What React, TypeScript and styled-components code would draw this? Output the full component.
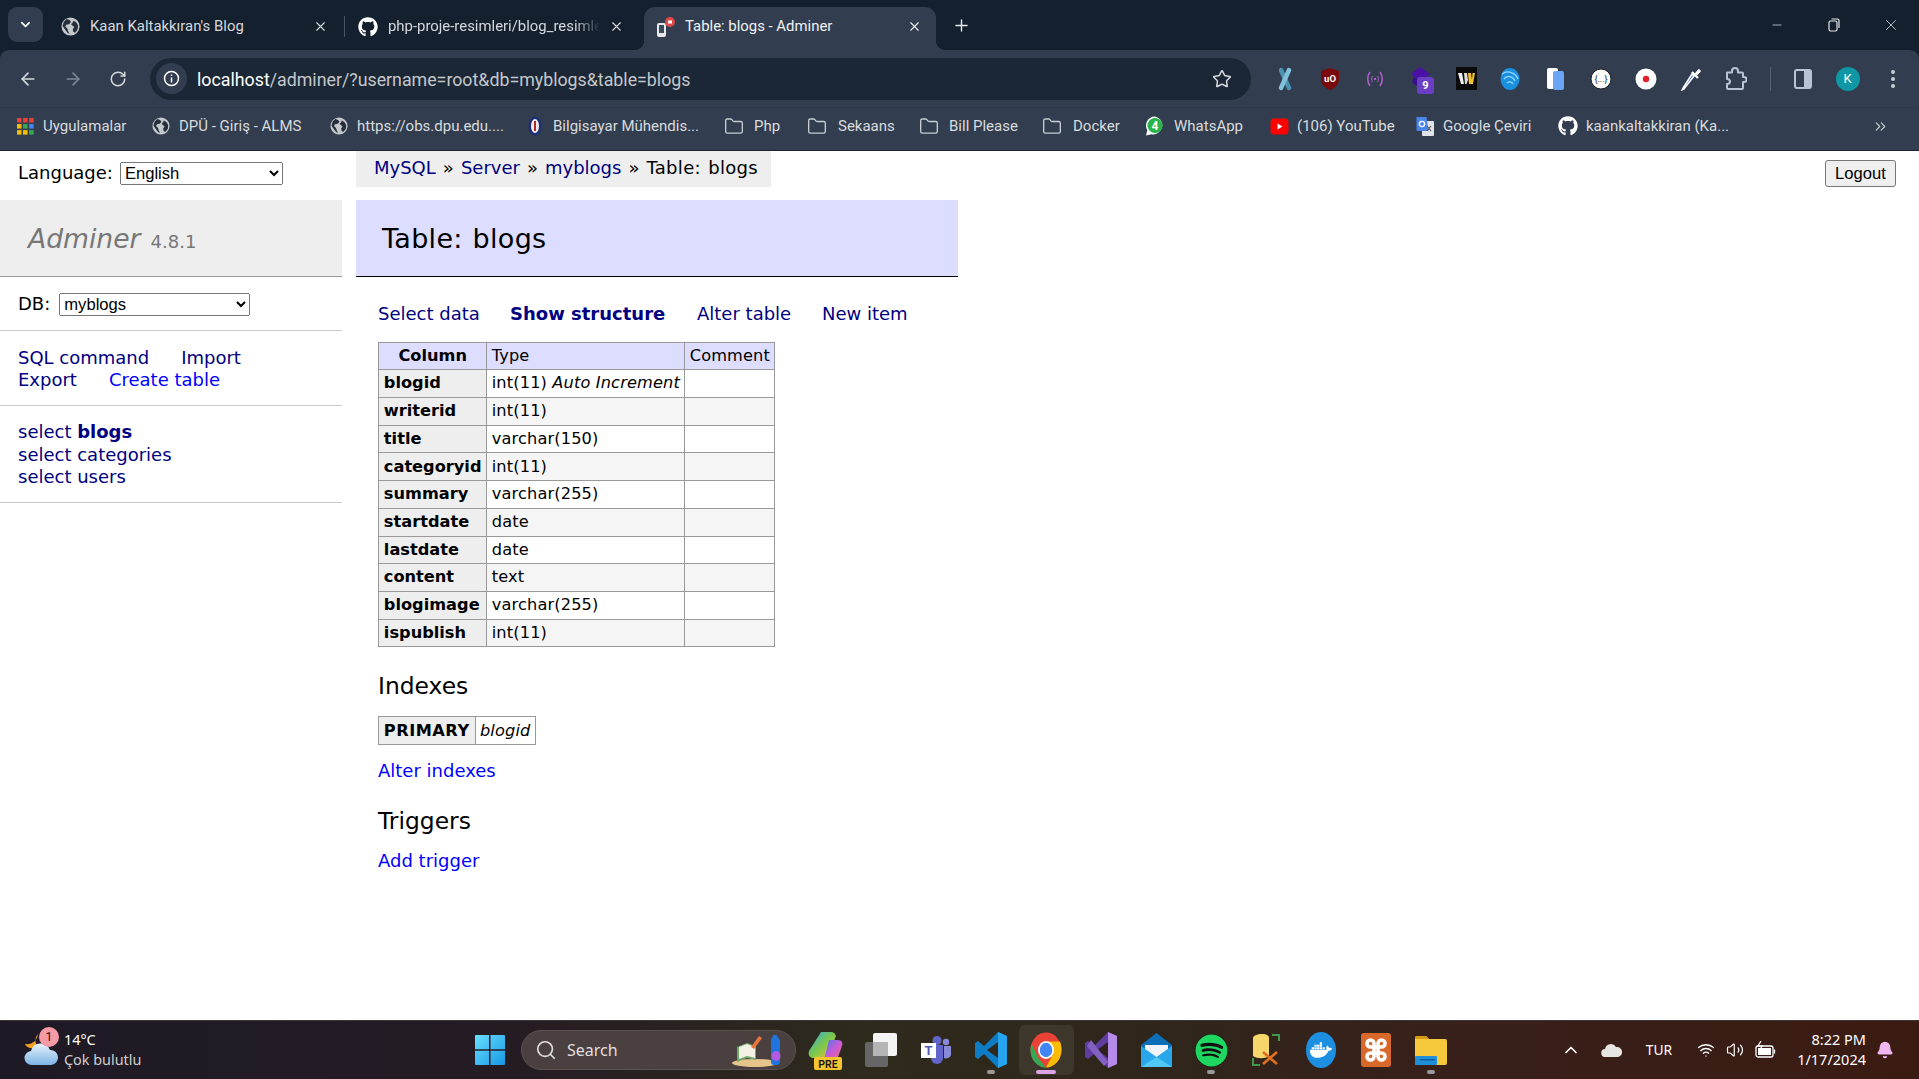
import React from 'react';
import styled, { createGlobalStyle } from 'styled-components';
import { ArrowLeft, ArrowRight, RotateCw, Star, Folder, ChevronDown, ChevronUp, Plus, X, Minus, ChevronsRight, Search, Wifi, Volume2, Bell } from 'lucide-react';
import { FaGithub, FaSpotify, FaDocker } from 'react-icons/fa';

const Global = createGlobalStyle`
  html, body { margin: 0; padding: 0; height: 100%; overflow: hidden; background: #fff; }
  #root { height: 100%; }
  * { box-sizing: border-box; }
`;

const Screen = styled.div`
  width: 1919px; height: 1079px; display: flex; flex-direction: column;
  font-family: "DejaVu Sans", Verdana, sans-serif; font-size: 18px; line-height: 22.5px; color: #000;
`;

/* ---------- browser chrome ---------- */
const Chrome = styled.div`
  background: #15202e; color: #e3e5e8; font-family: Roboto, "Noto Sans", sans-serif; flex: none;
  border-bottom: 1px solid #1b2533;
`;
const TabStrip = styled.div`display: flex; align-items: flex-end; height: 50px; padding-left: 8px;`;
const TabSearch = styled.div`
  width: 35px; height: 35px; margin: 0 8px 8px 0; border-radius: 9px; background: #323e4f;
  display: flex; align-items: center; justify-content: center; color: #fff;
`;
const Tab = styled.div<{ $w: number; $active?: boolean; $sep?: boolean; $pl: number; $pr: number }>`
  position: relative; width: ${p => p.$w}px; height: 43px; display: flex; align-items: center; flex: none;
  padding: 0 ${p => p.$pr}px 4px ${p => p.$pl}px;
  background: ${p => (p.$active ? '#323e4f' : 'transparent')};
  border-radius: 11px 11px 0 0; font-size: 14.9px;
  color: ${p => (p.$active ? '#f0f1f3' : '#d5d8dc')};
  ${p => p.$sep && `&::before { content: ''; position: absolute; left: 0; top: 9px; height: 21px; width: 1px; background: #4a5563; }`}
  ${p => p.$active && `
    &::before, &::after { content: ''; position: absolute; bottom: 0; width: 10px; height: 10px; }
    &::before { left: -10px; background: radial-gradient(circle at 0 0, transparent 10px, #323e4f 10.5px); }
    &::after { right: -10px; background: radial-gradient(circle at 100% 0, transparent 10px, #323e4f 10.5px); }
  `}
`;
const TabTitle = styled.span<{ $fade?: boolean; $gap: number }>`
  flex: 1; min-width: 0; white-space: nowrap; overflow: hidden; margin-left: ${p => p.$gap}px;
  ${p => p.$fade && `margin-right: 9px; -webkit-mask-image: linear-gradient(to right, #000 88%, transparent 100%); mask-image: linear-gradient(to right, #000 88%, transparent 100%);`}
`;
const NewTab = styled.div`
  width: 24px; height: 24px; margin: 0 0 13px 13px; display: flex; align-items: center; justify-content: center; color: #e8eaed;
`;
const WindowButtons = styled.div`display: flex; margin-left: auto; height: 50px; align-items: center; color: #e6e8ea;`;
const WinBtn = styled.div<{ $w: number }>`width: ${p => p.$w}px; display: flex; justify-content: center; align-items: center;`;

const Toolbar = styled.div`
  height: 58px; background: #323e4f; border-radius: 9px 9px 0 0; display: flex; align-items: center; padding: 0 0 0 10px;
  border-bottom: 1px solid #2c3747;
`;
const NavBtn = styled.div<{ $dim?: boolean }>`
  width: 36px; height: 36px; margin-right: 9px; display: flex; align-items: center; justify-content: center;
  color: ${p => (p.$dim ? '#7d8794' : '#d5d8dc')};
`;
const Omnibox = styled.div`
  width: 1101px; height: 42px; margin-left: 5px; border-radius: 21px; background: #1c2736;
  display: flex; align-items: center; padding-left: 6px; flex: none;
`;
const InfoCircle = styled.div`
  width: 31px; height: 31px; border-radius: 50%; background: #323e4f; display: flex; align-items: center; justify-content: center; flex: none;
`;
const Url = styled.div`flex: 1; margin-left: 10px; padding-top: 3px; font-size: 17.8px; color: #c3c7cc; white-space: nowrap;`;
const UrlHost = styled.span`color: #fff;`;
const OmniStar = styled.div`width: 58px; display: flex; justify-content: center; color: #d5d8dc;`;
const Exts = styled.div`display: flex; align-items: center; margin-left: 11px;`;
const ExtSlot = styled.div<{ $w?: number }>`
  position: relative; width: ${p => p.$w ?? 45}px; display: flex; align-items: center; justify-content: center; flex: none;
`;
const ExtBadge = styled.span`
  position: absolute; left: 20px; top: 10px; width: 17px; height: 17px; border-radius: 3px; background: #6a3fc4; color: #fff;
  font: bold 11px/17px Roboto, sans-serif; text-align: center;
`;
const ToolSep = styled.div`width: 1px; height: 24px; background: #556070;`;
const Avatar = styled.div`
  width: 24px; height: 24px; border-radius: 50%; background: #0f97a6; color: #fff;
  font: 13px/24px Roboto, sans-serif; text-align: center;
`;

const Bookmarks = styled.div`height: 42px; background: #323e4f; display: flex; align-items: center; padding: 0 0 6px 15px; position: relative;`;
const Bookmark = styled.div<{ $w: number; $gap: number }>`
  width: ${p => p.$w}px; flex: none; display: flex; align-items: center; gap: ${p => p.$gap}px; font-size: 15px; white-space: nowrap; color: #d9dbde;
`;
const BookmarkIcon = styled.span`width: 20px; height: 20px; display: flex; align-items: center; justify-content: center; flex: none;`;
const More = styled.div`margin-left: auto; margin-right: 30px; color: #c8ccd1; display: flex;`;

/* ---------- page ---------- */
const Page = styled.div`
  flex: 1; min-height: 0; background: #fff; display: grid; grid-template-columns: 342px 602px 1fr; column-gap: 14px;
`;
const Sidebar = styled.aside`display: flex; flex-direction: column;`;
const LangRow = styled.div`height: 49px; display: flex; align-items: center; gap: 7px; padding: 0 0 5px 18px;`;
const NativeSelect = styled.select<{ $w: number }>`
  width: ${p => p.$w}px; height: 23px; font: 16.6px "Liberation Sans", Arial, sans-serif; color: #000;
`;
const Logo = styled.div`
  height: 77px; background: #eee; border-bottom: 1px solid #999; padding: 2px 0 0 28px; display: flex; align-items: center; gap: 10px;
`;
const LogoName = styled.a`font-style: italic; font-size: 26.6px; color: #777; line-height: 34px;`;
const LogoVersion = styled.span`font-size: 18px; color: #777; position: relative; top: 3px;`;
const DbRow = styled.div`height: 54px; display: flex; align-items: center; gap: 9px; padding: 2px 0 0 18px; border-bottom: 1px solid #ccc;`;
const SideLinks = styled.div`height: 75px; padding: 15.5px 0 0 18px; border-bottom: 1px solid #ccc;`;
const LinkLine = styled.div`display: flex; gap: 32px;`;
const Link = styled.a<{ $fresh?: boolean; $bold?: boolean }>`
  color: ${p => (p.$fresh ? '#00f' : '#000080')}; font-weight: ${p => (p.$bold ? 700 : 400)}; white-space: pre;
`;
const SideTables = styled.div`height: 97px; padding: 15px 0 0 18px; border-bottom: 1px solid #ccc;`;

const Main = styled.main`display: flex; flex-direction: column; align-items: flex-start;`;
const Crumbs = styled.div`
  background: #eee; height: 36px; padding: 6px 18px 0; margin-bottom: 13px; white-space: pre; width: 415px; word-spacing: 1.3px;
`;
const CrumbCurrent = styled.span`letter-spacing: .3px;`;
const Header = styled.div`
  align-self: stretch; height: 77px; background: #ddf; border-bottom: 1px solid #000; padding: 2px 0 0 26px; display: flex; align-items: center;
`;
const Title = styled.h2`margin: 0; font-size: 27px; font-weight: 400; line-height: 34px; letter-spacing: .3px; word-spacing: 1px;`;
const Content = styled.div`padding: 26px 0 0 22px; display: flex; flex-direction: column; align-items: flex-start;`;
const TopLinks = styled.div`display: flex; height: 22.5px; margin-bottom: 16px;`;
const TopLink = styled(Link)<{ $w: number }>`width: ${p => p.$w}px;`;
const Grid = styled.table`border-collapse: collapse; border: 1px solid #999; font-size: 16.2px; line-height: 20.25px;`;
const Row = styled.tr<{ $even?: boolean }>`background: ${p => (p.$even ? '#f5f5f5' : '#fff')};`;
const HeadTh = styled.th`background: #ddf; border: 1px solid #999; padding: 3.24px 4.86px; font-weight: 700; text-align: center; white-space: nowrap;`;
const HeadTd = styled.td`background: #ddf; border: 1px solid #999; padding: 3.24px 4.4px; white-space: nowrap; letter-spacing: .14px;`;
const Th = styled.th`background: #eee; border: 1px solid #999; padding: 3.24px 4.86px; font-weight: 700; text-align: left; white-space: nowrap;`;
const KeyTh = styled(Th)`letter-spacing: .5px;`;
const Td = styled.td`border: 1px solid #999; padding: 3.24px 4.4px; white-space: nowrap; letter-spacing: .14px;`;
const Em = styled.i`font-style: italic;`;
const H3 = styled.h3`margin: 0; font-size: 23.4px; font-weight: 400; line-height: 30px;`;
const IndexHead = styled(H3)`margin-top: 24px;`;
const IndexGrid = styled(Grid)`margin-top: 15px;`;
const AfterIndex = styled.div`margin-top: 15px;`;
const TriggerHead = styled(H3)`margin-top: 23px;`;
const AfterTrigger = styled.div`margin-top: 14px;`;
const Aside = styled.div`display: flex; justify-content: flex-end; align-items: flex-start; padding: 9px 23px 0 0;`;
const Logout = styled.button`
  width: 71px; height: 27px; padding: 0; font: 16.6px "Liberation Sans", Arial, sans-serif; color: #000;
  background: #efefef; border: 1px solid #767676; border-radius: 3px;
`;

/* ---------- taskbar ---------- */
const Taskbar = styled.div`
  height: 59px; flex: none; display: flex; align-items: center; font-family: "Noto Sans", Roboto, sans-serif; color: #fff;
  background: linear-gradient(90deg, #1e1a25 0%, #241b24 25%, #2e2a1c 45%, #2f261b 60%, #38201a 75%, #3a1b12 100%);
  border-top: 1px solid #3a3636;
`;
const Weather = styled.div`width: 462px; flex: none; display: flex; align-items: center; padding-left: 24px; position: relative; height: 100%;`;
const WeatherBadge = styled.span`
  position: absolute; left: 39px; top: 6px; width: 20px; height: 20px; border-radius: 50%; background: #f79aa6; color: #3a1518;
  font: 13px/20px Roboto, sans-serif; text-align: center;
`;
const WeatherText = styled.div`margin-left: 6px; font-size: 14.4px; line-height: 20px;`;
const WeatherSub = styled.div`color: #cfcfcf;`;
const StartSlot = styled.div`width: 56px; flex: none; display: flex; justify-content: center;`;
const SearchBox = styled.div`
  width: 275px; height: 40px; margin-left: 3px; flex: none; border-radius: 20px; background: #4a403f; border: 1px solid #5a504f;
  display: flex; align-items: center; padding-left: 13px; color: #e2dfdf; font-size: 16px; position: relative;
`;
const SearchLabel = styled.span`margin-left: 10px;`;
const SearchArt = styled.span`margin-left: auto; margin-right: 8px; display: flex;`;
const AppSlots = styled.div`display: flex; margin-left: 2.5px;`;
const AppSlot = styled.div<{ $active?: boolean }>`
  position: relative; width: 55px; height: 50px; display: flex; align-items: center; justify-content: center; border-radius: 6px; flex: none;
  background: ${p => (p.$active ? 'rgba(255,255,255,.07)' : 'transparent')};
`;
const Indicator = styled.span<{ $active?: boolean }>`
  position: absolute; bottom: 1px; left: 50%; transform: translateX(-50%); height: 4px; border-radius: 2px;
  width: ${p => (p.$active ? 20 : 8)}px; background: ${p => (p.$active ? '#dca3e6' : '#9a9a9a')};
`;
const Tray = styled.div`margin-left: auto; display: flex; align-items: center; padding-right: 15px; height: 100%;`;
const TraySlot = styled.div<{ $w: number }>`width: ${p => p.$w}px; flex: none; display: flex; justify-content: center; align-items: center;`;
const TrayLang = styled(TraySlot)`font-size: 13.8px;`;
const Clock = styled.div`width: 79px; flex: none; text-align: right; font-size: 14.5px; line-height: 20px; padding-bottom: 3px;`;

/* ---------- drawings ---------- */
const Globe = ({ size = 19 }: { size?: number }) => (
  <svg width={size} height={size} viewBox="0 0 20 20">
    <circle cx="10" cy="10" r="9.5" fill="#c4c7cc" />
    <path d="M6 2.2l3 1 1.5 2-2 2.4-3 .5-1 2 2.2 2 .8 3 1.5 2.4-2-.6L4 13 1.6 9.5 3 5zM13 4l3 1.5 2 3.5-.4 4-2.6 3.5-2-.6-.6-3 1.6-2.4-2-1.6-1.4-1.4 1.6-1.4z" fill="#26303d" />
  </svg>
);
const AdminerFav = () => (
  <svg width="22" height="22" viewBox="0 0 22 22">
    <rect x="2" y="7" width="9" height="14" rx="2" fill="#e8e8ea" />
    <rect x="4" y="9" width="5" height="8" fill="#3b4a5c" />
    <circle cx="15" cy="6" r="5" fill="#e04848" />
    <path d="M13 4.5h4v3h-4z" fill="#fff" />
  </svg>
);
const Apps = () => (
  <svg width="17" height="17" viewBox="0 0 18 18">
    {[['#e94235', '#e94235', '#e94235'], ['#fbbc04', '#34a853', '#4285f4'], ['#fbbc04', '#fbbc04', '#34a853']].map((row, y) =>
      row.map((c, x) => <rect key={`${x}${y}`} x={x * 6.4} y={y * 6.4} width="4.8" height="4.8" fill={c} />))}
  </svg>
);
const Crest = () => (
  <svg width="14" height="20" viewBox="0 0 14 20">
    <ellipse cx="7" cy="10" rx="6.5" ry="9.5" fill="#1d2f7a" /><ellipse cx="7" cy="10" rx="4" ry="7" fill="#f1eee8" /><path d="M6 5h2v10H6z" fill="#b9252b" />
  </svg>
);
const Whats = () => (
  <svg width="21" height="22" viewBox="0 0 20 21">
    <path d="M10 1a9 9 0 0 0-7.7 13.6L1 20l5.5-1.3A9 9 0 1 0 10 1z" fill="#fff" />
    <circle cx="10" cy="10" r="7.6" fill="#28b44a" />
    <text x="10" y="14.5" fontSize="12" fontWeight="700" fill="#fff" textAnchor="middle" fontFamily="Roboto">4</text>
  </svg>
);
const Yt = () => (
  <svg width="19" height="19" viewBox="0 0 19 19"><rect x="0.5" y="1.5" width="18" height="16" rx="3.5" fill="#f00" /><path d="M7.5 6.5l5 3-5 3z" fill="#fff" /></svg>
);
const Translate = () => (
  <svg width="20" height="21" viewBox="0 0 20 21">
    <rect x="7" y="5" width="12" height="15" rx="1" fill="#dfe3e8" /><path d="M1.5 1h10l2 14H3a1.5 1.5 0 0 1-1.5-1.5z" fill="#4a86e8" />
    <circle cx="7" cy="8" r="2.6" fill="none" stroke="#fff" strokeWidth="1.3" /><path d="M12 10l4 5M16 10l-4 5" stroke="#555" strokeWidth="1.2" />
  </svg>
);
const XCross = () => (
  <svg width="18" height="24" viewBox="0 0 18 24">
    <path d="M5 3l8 18" stroke="#4a93b3" strokeWidth="4.5" strokeLinecap="round" /><path d="M13 3L5 21" stroke="#7fc1dc" strokeWidth="4.5" strokeLinecap="round" />
  </svg>
);
const UBlock = () => (
  <svg width="20" height="24" viewBox="0 0 20 24">
    <path d="M10 1l9 3v8c0 5-4 9-9 11-5-2-9-6-9-11V4z" fill="#7a0a0c" />
    <text x="10" y="14.5" fontSize="9.5" fontWeight="700" fill="#fff" textAnchor="middle" fontFamily="Roboto">uO</text>
  </svg>
);
const Cast = () => (
  <svg width="20" height="20" viewBox="0 0 20 20" fill="none" stroke="#b05fc9" strokeWidth="1.6">
    <path d="M5 3c-3 4-3 10 0 14M15 3c3 4 3 10 0 14" /><circle cx="10" cy="10" r="1.2" fill="#b05fc9" stroke="none" /><path d="M7.4 7c-1 2-1 4 0 6M12.6 7c1 2 1 4 0 6" strokeWidth="1" />
  </svg>
);
const Diamond = () => (
  <svg width="22" height="24" viewBox="0 0 22 24"><path d="M10 0l10 7-10 7L1 7z" fill="#4a10a8" /><path d="M4 10l8 6-4 4-6-5z" fill="#3a0c90" /></svg>
);
const WaBox = () => (
  <svg width="21" height="23" viewBox="0 0 21 23">
    <rect width="21" height="23" fill="#0a0a0a" />
    <path d="M2 6h4l2 11H5z" fill="#eee" /><path d="M8 6h3l1 7-1.500 4H9z" fill="#ddd" /><path d="M12 6h3l1 7 .5-7H19l-2 11h-4z" fill="#f2c230" />
  </svg>
);
const Swirl = () => (
  <svg width="22" height="24" viewBox="0 0 22 24" fill="none">
    <ellipse cx="11" cy="12" rx="9.500" ry="11" fill="#1b8fe0" />
    <path d="M3 7c5-4 13-2 16 5M5 12c3-4 9-3 11 2M8 16c2-2 5-1 6 1" stroke="#8fd6ff" strokeWidth="1.400" />
  </svg>
);
const Docs = () => (
  <svg width="20" height="24" viewBox="0 0 20 24"><rect x="1" y="1" width="11" height="21" rx="2" fill="#fff" /><rect x="7" y="4" width="11" height="19" rx="2" fill="#6ba6f5" /></svg>
);
const Braces = () => (
  <svg width="22" height="22" viewBox="0 0 22 22">
    <circle cx="11" cy="11" r="10" fill="#fff" stroke="#222" strokeWidth="1" />
    <text x="11" y="14.2" fontSize="9" fill="#222" textAnchor="middle" fontFamily="Roboto">{'{...}'}</text>
  </svg>
);
const Rec = () => (
  <svg width="22" height="22" viewBox="0 0 22 22"><circle cx="11" cy="11" r="10.500" fill="#fff" /><circle cx="11" cy="11" r="3.200" fill="#e5202a" /></svg>
);
const Dropper = () => (
  <svg width="22" height="24" viewBox="0 0 22 24" fill="none">
    <path d="M3 21l-1 2 2-1L14 9l-2-2z" fill="#3f6fe0" stroke="#fff" strokeWidth="1.500" />
    <path d="M12 5l6 6" stroke="#fff" strokeWidth="2.400" /><path d="M15 7l3-4c1-1.400 3 .6 2 2l-3 3" fill="#fff" stroke="#fff" />
  </svg>
);
const ExtPuzzle = () => (
  <svg width="22" height="24" viewBox="0 0 22 24" fill="none" stroke="#b9c3d3" strokeWidth="2" strokeLinejoin="round">
    <path d="M2 5.500h5V4a3 3 0 0 1 6 0v1.500h4a1 1 0 0 1 1 1V10h1a2.500 2.500 0 0 1 0 5h-1v6a1 1 0 0 1-1 1H3a1 1 0 0 1-1-1v-4c2.500 0 3-1.500 3-2.500S4.500 12 2 12z" />
  </svg>
);
const SidePanel = () => (
  <svg width="18" height="20" viewBox="0 0 18 20"><rect x="1" y="1" width="16" height="18" rx="2" fill="none" stroke="#b9c3d3" strokeWidth="2" /><rect x="10" y="1" width="7" height="18" fill="#b9c3d3" /></svg>
);
const Dots = () => (
  <svg width="6" height="20" viewBox="0 0 6 20" fill="#c8ced6"><circle cx="3" cy="3" r="2" /><circle cx="3" cy="10" r="2" /><circle cx="3" cy="17" r="2" /></svg>
);
const Restore = () => (
  <svg width="12" height="14" viewBox="0 0 12 14" fill="none" stroke="#e6e8ea" strokeWidth="1.200"><rect x="1" y="3" width="8" height="10" rx="1.500" /><path d="M3.500 1H9.500a1.500 1.500 0 0 1 1.500 1.500V10" /></svg>
);
const InfoIcon = () => (
  <svg width="17" height="17" viewBox="0 0 17 17" fill="none" stroke="#fff" strokeWidth="1.500"><circle cx="8.500" cy="8.500" r="7" /><path d="M8.500 7.500v5M8.500 4.400v1.600" /></svg>
);
const WeatherIcon = () => (
  <svg width="34" height="36" viewBox="0 0 34 36">
    <path d="M14 2a10 10 0 0 0 4 16L6 16c-3-1-4-2-5-4 7 1 12-3 13-10z" fill="#f3a122" />
    <defs><linearGradient id="cl" x1="0" x2="0" y1="0" y2="1"><stop offset="0" stopColor="#e6f2fb" /><stop offset="1" stopColor="#7db4e6" /></linearGradient></defs>
    <path d="M8 33a7 7 0 0 1-1-14 10 10 0 0 1 19-1 7.500 7.500 0 0 1 1 15z" fill="url(#cl)" />
  </svg>
);
const StartLogo = () => (
  <svg width="30" height="30" viewBox="0 0 30 30">
    <defs><linearGradient id="win" x1="0" y1="0" x2="1" y2="1"><stop offset="0" stopColor="#6be0ff" /><stop offset="1" stopColor="#1597e5" /></linearGradient></defs>
    <path d="M0 1a1 1 0 0 1 1-1h13v14.200H0zM15.500 0H29a1 1 0 0 1 1 1v13.200H15.500zM0 15.700h14V30H1a1 1 0 0 1-1-1zM15.500 15.700H30V29a1 1 0 0 1-1 1H15.500z" fill="url(#win)" />
  </svg>
);
const SearchIllustration = () => (
  <svg width="56" height="34" viewBox="0 0 56 34">
    <ellipse cx="24" cy="30" rx="23" ry="4" fill="#e6c58b" />
    <path d="M6 14l10-4 9 3v14l-9-2-10 4z" fill="#6fa86a" /><path d="M8 14l8-3 8 3v11l-8-2-8 3z" fill="#f3f1e4" />
    <path d="M20 14L28 3l3 2-8 11z" fill="#e8743b" />
    <path d="M40 8c0-3 2-3 2-6h4c0 3 3 3 3 6v21c0 2-2 3-4 3h-2c-2 0-3-1-3-3z" fill="#1f74e0" /><ellipse cx="45" cy="23" rx="4.500" ry="5" fill="#b05be0" />
  </svg>
);
const Copilot = () => (
  <svg width="38" height="40" viewBox="0 0 38 40">
    <defs><linearGradient id="cpa" x1="0" y1="0" x2="1" y2="1"><stop offset="0" stopColor="#2aa7e8" /><stop offset=".5" stopColor="#7bc74a" /><stop offset="1" stopColor="#f5c53b" /></linearGradient>
      <linearGradient id="cpb" x1="0" y1="0" x2="1" y2="1"><stop offset="0" stopColor="#3f7be8" /><stop offset=".5" stopColor="#c85bd8" /><stop offset="1" stopColor="#f06a7a" /></linearGradient></defs>
    <path d="M14 2h10c3 0 4 2 5 4l-9 22H6c-4 0-5-4-4-7z" fill="url(#cpa)" /><path d="M22 10h9c4 0 5 3 4 6l-4 11c-1 2-2 3-5 3H17z" fill="url(#cpb)" />
    <rect x="7" y="27" width="28" height="13" rx="2" fill="#f7c62f" />
    <text x="21" y="37.500" fontSize="10.500" fontWeight="700" fill="#1a1a1a" textAnchor="middle" fontFamily="Roboto">PRE</text>
  </svg>
);
const TaskView = () => (
  <svg width="32" height="34" viewBox="0 0 32 34">
    <rect x="0" y="9" width="23" height="25" rx="2" fill="#666" /><rect x="8" y="0" width="24" height="23" rx="2" fill="#f4f4f4" /><rect x="8" y="9" width="15" height="14" fill="#b5b5b5" />
  </svg>
);
const Teams = () => (
  <svg width="30" height="28" viewBox="0 0 30 28">
    <circle cx="16" cy="4.500" r="4.500" fill="#6264c9" /><circle cx="25" cy="6" r="3.200" fill="#8889d8" />
    <path d="M10 9h12v13a6 6 0 0 1-12 0z" fill="#6264c9" /><path d="M23 10h7v9a5 5 0 0 1-7 3z" fill="#8889d8" />
    <rect x="0" y="7" width="15" height="15" fill="#fff" />
    <text x="7.500" y="19" fontSize="13" fontWeight="700" fill="#5457b8" textAnchor="middle" fontFamily="Roboto">T</text>
  </svg>
);
const VsCode = () => (
  <svg width="32" height="36" viewBox="0 0 32 36">
    <path d="M23 0l9 4v28l-9 4-14-14-6 5-3-2v-14l3-2 6 5z" fill="#0d7cc4" /><path d="M23 0l9 4v28l-9 4z" fill="#26a5ee" /><path d="M23 10L12 18l11 8z" fill="#2d2a1c" />
  </svg>
);
const ChromeLogo = () => (
  <svg width="32" height="36" viewBox="0 0 32 36">
    <ellipse cx="16" cy="18" rx="15.500" ry="17.500" fill="#ea4335" />
    <path d="M1.500 12L9 27l7 8.500C7 35.500.5 27.500.5 18c0-2 .3-4 1-6z" fill="#34a853" /><path d="M16 9.500h14c1 2.500 1.500 5.500 1.500 8.500 0 9.500-7 17.500-15.500 17.500L23 22z" fill="#fbbc04" />
    <ellipse cx="16" cy="18" rx="8" ry="9" fill="#fff" /><ellipse cx="16" cy="18" rx="6.300" ry="7.200" fill="#4285f4" />
  </svg>
);
const VStudio = () => (
  <svg width="32" height="36" viewBox="0 0 32 36">
    <path d="M23 0l9 4v28l-9 4-14-14-6 5-3-2v-14l3-2 6 5z" fill="#5e3d9e" /><path d="M23 0l9 4v28l-9 4z" fill="#b58ae8" /><path d="M23 10L12 18l11 8z" fill="#30201c" /><path d="M6 8l17 22-4 4L2 14z" fill="#8261c2" />
  </svg>
);
const Mail = () => (
  <svg width="31" height="34" viewBox="0 0 31 34">
    <path d="M0 12L15.500 0 31 12v22H0z" fill="#0b6fb8" /><path d="M4 12h23v10l-11.500 6L4 22z" fill="#f0f4f8" />
    <path d="M0 13l15.500 11L31 13v21H0z" fill="#28a8ea" /><path d="M0 34l15.500-10L31 34z" fill="#50c8f5" />
  </svg>
);
const Workbench = () => (
  <svg width="30" height="34" viewBox="0 0 30 34" fill="none">
    <path d="M2 5c0-2 4-4 9-4s7 2 7 4v18c-4 3-12 3-16 0z" fill="#f5d76b" />
    <path d="M21 2h7v6M9 32H2v-7" stroke="#3d9a4a" strokeWidth="2" />
    <path d="M12 19l14 12M26 19L12 31" stroke="#e0701e" strokeWidth="2.600" />
  </svg>
);
const Xampp = () => (
  <svg width="30" height="34" viewBox="0 0 30 34">
    <rect width="30" height="34" rx="3" fill="#d9692b" />
    <path d="M12 14H9.500a3.500 3.500 0 1 1 3.500-3.500V23.500A3.500 3.500 0 1 1 9.500 20H20.500a3.500 3.500 0 1 1-3.500 3.500V10.500A3.500 3.500 0 1 1 20.500 14H12z" fill="none" stroke="#fff" strokeWidth="3.600" />
  </svg>
);
const FolderApp = () => (
  <svg width="32" height="30" viewBox="0 0 32 30">
    <path d="M0 3a2 2 0 0 1 2-2h9l3 3h16a2 2 0 0 1 2 2v22a2 2 0 0 1-2 2H2a2 2 0 0 1-2-2z" fill="#f6c93d" />
    <path d="M0 3a2 2 0 0 1 2-2h9l3 3H0z" fill="#d99a13" /><rect x="0" y="21" width="22" height="9" rx="1" fill="#1f8fd8" /><rect x="5" y="24" width="15" height="1.500" fill="#0e5f9c" />
  </svg>
);
const DockerRound = () => (
  <svg width="30" height="36" viewBox="0 0 30 36"><ellipse cx="15" cy="18" rx="15" ry="18" fill="#1d8fe1" /></svg>
);
const Cloud = () => (
  <svg width="21" height="14" viewBox="0 0 21 14"><path d="M4.500 14a4 4 0 0 1-.5-8 6 6 0 0 1 11-2 5 5 0 0 1 2 10z" fill="#e8e4e2" /></svg>
);
const Battery = () => (
  <svg width="22" height="18" viewBox="0 0 22 18" fill="none" stroke="#fff" strokeWidth="1.300">
    <rect x="1" y="5" width="17" height="11" rx="2" /><rect x="3" y="7" width="13" height="7" fill="#fff" stroke="none" /><path d="M19.500 8.500v4" /><path d="M6 0L3 5h4L5 9" fill="#3a1b12" />
  </svg>
);

const tableRows: [string, React.ReactNode][] = [
  ['blogid', <>int(11) <Em>Auto Increment</Em></>],
  ['writerid', 'int(11)'],
  ['title', 'varchar(150)'],
  ['categoryid', 'int(11)'],
  ['summary', 'varchar(255)'],
  ['startdate', 'date'],
  ['lastdate', 'date'],
  ['content', 'text'],
  ['blogimage', 'varchar(255)'],
  ['ispublish', 'int(11)'],
];

const folderIcon = <Folder size={21} strokeWidth={1.6} color="#c8ccd1" />;

const bookmarks: { w: number; gap: number; icon: React.ReactNode; label: string }[] = [
  { w: 136, gap: 8, icon: <Apps />, label: 'Uygulamalar' },
  { w: 178, gap: 8, icon: <Globe size={18} />, label: 'DPÜ - Giriş - ALMS' },
  { w: 196, gap: 8, icon: <Globe size={18} />, label: 'https://obs.dpu.edu....' },
  { w: 199, gap: 8, icon: <Crest />, label: 'Bilgisayar Mühendis...' },
  { w: 83, gap: 10, icon: folderIcon, label: 'Php' },
  { w: 112, gap: 11, icon: folderIcon, label: 'Sekaans' },
  { w: 123, gap: 10, icon: folderIcon, label: 'Bill Please' },
  { w: 103, gap: 11, icon: folderIcon, label: 'Docker' },
  { w: 124, gap: 9, icon: <Whats />, label: 'WhatsApp' },
  { w: 146, gap: 8, icon: <Yt />, label: '(106) YouTube' },
  { w: 143, gap: 8, icon: <Translate />, label: 'Google Çeviri' },
  { w: 180, gap: 8, icon: <FaGithub size={20} color="#fff" />, label: 'kaankaltakkiran (Ka...' },
];

function AppDocker() {
  return (
    <DockerWrap>
      <DockerRound />
      <DockerWhale><FaDocker size={22} color="#fff" /></DockerWhale>
    </DockerWrap>
  );
}
const DockerWrap = styled.span`position: relative; display: flex; align-items: center; justify-content: center;`;
const DockerWhale = styled.span`position: absolute; display: flex;`;
const SpotifyWrap = styled.span`display: flex; background: #111; border-radius: 50%;`;

const apps: { node: React.ReactNode; active?: boolean; open?: boolean }[] = [
  { node: <Copilot /> },
  { node: <TaskView /> },
  { node: <Teams /> },
  { node: <VsCode />, open: true },
  { node: <ChromeLogo />, active: true },
  { node: <VStudio /> },
  { node: <Mail /> },
  { node: <SpotifyWrap><FaSpotify size={33} color="#1ed760" /></SpotifyWrap>, open: true },
  { node: <Workbench /> },
  { node: <AppDocker /> },
  { node: <Xampp /> },
  { node: <FolderApp />, open: true },
];

export default function App() {
  return (
    <Screen>
      <Global />
      <Chrome>
        <TabStrip>
          <TabSearch><ChevronDown size={15} strokeWidth={2.6} /></TabSearch>
          <Tab $w={293} $pl={10} $pr={16}>
            <Globe />
            <TabTitle $gap={10}>Kaan Kaltakkıran's Blog</TabTitle>
            <X size={15} strokeWidth={1.8} />
          </Tab>
          <Tab $w={300} $sep $pl={14} $pr={20}>
            <FaGithub size={20} color="#fff" />
            <TabTitle $fade $gap={10}>php-proje-resimleri/blog_resimleri</TabTitle>
            <X size={15} strokeWidth={1.8} />
          </Tab>
          <Tab $w={292} $active $pl={11} $pr={14}>
            <AdminerFav />
            <TabTitle $gap={8}>Table: blogs - Adminer</TabTitle>
            <X size={15} strokeWidth={1.8} />
          </Tab>
          <NewTab><Plus size={19} strokeWidth={1.8} /></NewTab>
          <WindowButtons>
            <WinBtn $w={56}><Minus size={14} strokeWidth={1.2} /></WinBtn>
            <WinBtn $w={57}><Restore /></WinBtn>
            <WinBtn $w={57}><X size={18} strokeWidth={1} /></WinBtn>
          </WindowButtons>
        </TabStrip>
        <Toolbar>
          <NavBtn><ArrowLeft size={20} strokeWidth={2} /></NavBtn>
          <NavBtn $dim><ArrowRight size={20} strokeWidth={2} /></NavBtn>
          <NavBtn><RotateCw size={18} strokeWidth={2} /></NavBtn>
          <Omnibox>
            <InfoCircle><InfoIcon /></InfoCircle>
            <Url><UrlHost>localhost</UrlHost>/adminer/?username=root&amp;db=myblogs&amp;table=blogs</Url>
            <OmniStar><Star size={20} strokeWidth={1.8} /></OmniStar>
          </Omnibox>
          <Exts>
            <ExtSlot><XCross /></ExtSlot>
            <ExtSlot><UBlock /></ExtSlot>
            <ExtSlot><Cast /></ExtSlot>
            <ExtSlot $w={48}><Diamond /><ExtBadge>9</ExtBadge></ExtSlot>
            <ExtSlot $w={42}><WaBox /></ExtSlot>
            <ExtSlot $w={46}><Swirl /></ExtSlot>
            <ExtSlot><Docs /></ExtSlot>
            <ExtSlot><Braces /></ExtSlot>
            <ExtSlot><Rec /></ExtSlot>
            <ExtSlot><Dropper /></ExtSlot>
            <ExtSlot $w={46}><ExtPuzzle /></ExtSlot>
            <ExtSlot $w={22}><ToolSep /></ExtSlot>
            <ExtSlot $w={44}><SidePanel /></ExtSlot>
            <ExtSlot $w={45}><Avatar>K</Avatar></ExtSlot>
            <ExtSlot><Dots /></ExtSlot>
          </Exts>
        </Toolbar>
        <Bookmarks>
          {bookmarks.map(b => (
            <Bookmark key={b.label} $w={b.w} $gap={b.gap}>
              <BookmarkIcon>{b.icon}</BookmarkIcon>
              {b.label}
            </Bookmark>
          ))}
          <More><ChevronsRight size={17} strokeWidth={1.6} /></More>
        </Bookmarks>
      </Chrome>

      <Page>
        <Sidebar>
          <LangRow>
            Language:
            <NativeSelect $w={163} defaultValue="English"><option>English</option></NativeSelect>
          </LangRow>
          <Logo><LogoName>Adminer</LogoName><LogoVersion>4.8.1</LogoVersion></Logo>
          <DbRow>
            DB:
            <NativeSelect $w={191} defaultValue="myblogs"><option>myblogs</option></NativeSelect>
          </DbRow>
          <SideLinks>
            <LinkLine><Link>SQL command</Link><Link>Import</Link></LinkLine>
            <LinkLine><Link>Export</Link><Link $fresh>Create table</Link></LinkLine>
          </SideLinks>
          <SideTables>
            <div><Link>select </Link><Link $bold>blogs</Link></div>
            <div><Link>select categories</Link></div>
            <div><Link>select users</Link></div>
          </SideTables>
        </Sidebar>

        <Main>
          <Crumbs><Link>MySQL</Link> » <Link>Server</Link> » <Link>myblogs</Link> » <CrumbCurrent>Table: blogs</CrumbCurrent></Crumbs>
          <Header><Title>Table: blogs</Title></Header>
          <Content>
            <TopLinks>
              <TopLink $w={132}>Select data</TopLink>
              <TopLink $w={187} $bold>Show structure</TopLink>
              <TopLink $w={125}>Alter table</TopLink>
              <TopLink $w={100}>New item</TopLink>
            </TopLinks>
            <Grid>
              <tbody>
                <tr><HeadTh>Column</HeadTh><HeadTd>Type</HeadTd><HeadTd>Comment</HeadTd></tr>
                {tableRows.map(([name, type], i) => (
                  <Row key={name} $even={i % 2 === 1}>
                    <Th>{name}</Th><Td>{type}</Td><Td />
                  </Row>
                ))}
              </tbody>
            </Grid>
            <IndexHead>Indexes</IndexHead>
            <IndexGrid>
              <tbody><tr><KeyTh>PRIMARY</KeyTh><Td><Em>blogid</Em></Td></tr></tbody>
            </IndexGrid>
            <AfterIndex><Link $fresh>Alter indexes</Link></AfterIndex>
            <TriggerHead>Triggers</TriggerHead>
            <AfterTrigger><Link $fresh>Add trigger</Link></AfterTrigger>
          </Content>
        </Main>

        <Aside><Logout>Logout</Logout></Aside>
      </Page>

      <Taskbar>
        <Weather>
          <WeatherIcon />
          <WeatherBadge>1</WeatherBadge>
          <WeatherText>14°C<WeatherSub>Çok bulutlu</WeatherSub></WeatherText>
        </Weather>
        <StartSlot><StartLogo /></StartSlot>
        <SearchBox>
          <Search size={22} strokeWidth={1.8} />
          <SearchLabel>Search</SearchLabel>
          <SearchArt><SearchIllustration /></SearchArt>
        </SearchBox>
        <AppSlots>
          {apps.map((a, i) => (
            <AppSlot key={i} $active={a.active}>
              {a.node}
              {(a.open || a.active) && <Indicator $active={a.active} />}
            </AppSlot>
          ))}
        </AppSlots>
        <Tray>
          <TraySlot $w={40}><ChevronUp size={20} strokeWidth={2} /></TraySlot>
          <TraySlot $w={40}><Cloud /></TraySlot>
          <TrayLang $w={56}>TUR</TrayLang>
          <TraySlot $w={38}><Wifi size={18} strokeWidth={1.8} /></TraySlot>
          <TraySlot $w={20}><Volume2 size={18} strokeWidth={1.6} /></TraySlot>
          <TraySlot $w={42}><Battery /></TraySlot>
          <Clock>8:22 PM<br />1/17/2024</Clock>
          <TraySlot $w={38}><Bell size={18} fill="#efb8f0" color="#efb8f0" /></TraySlot>
        </Tray>
      </Taskbar>
    </Screen>
  );
}
